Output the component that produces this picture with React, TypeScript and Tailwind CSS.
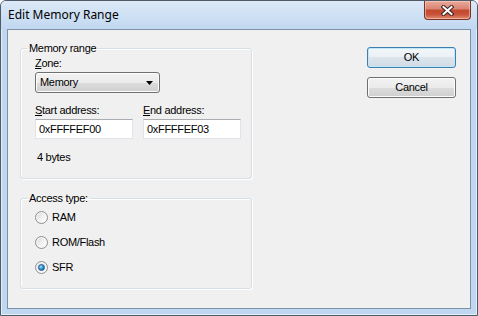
import React from "react";

function Radio({ label, checked }: { label: string; checked?: boolean }) {
  return (
    <div className="flex items-center h-[14px] gap-[4px]">
      <div className="w-[13px] h-[13px] rounded-full border border-[#8e8f8f] bg-[linear-gradient(135deg,#d9d9d9,#f4f4f4_60%,#ffffff)] flex items-center justify-center shadow-[inset_0_0_0_1px_#f7f7f7]">
        {checked && (
          <div className="w-[7px] h-[7px] rounded-full bg-[radial-gradient(circle_at_35%_35%,#9ee0ff,#2b8ad0_55%,#0d4f8a)] border border-[#1c5a8c]" />
        )}
      </div>
      <span>{label}</span>
    </div>
  );
}

export default function App() {
  return (
    <div className="w-[478px] h-[316px] flex flex-col border border-[#4f5b68] rounded-t-[6px] bg-[#bfd7f1] shadow-[inset_0_0_0_1px_#e4eefa] text-[11px] tracking-[-0.3px] text-black font-['Liberation_Sans',sans-serif]">
      {/* title bar */}
      <div className="h-[28px] flex items-start justify-between pl-[7px] pr-[6px] rounded-t-[5px] bg-gradient-to-b from-[#dce9f7] to-[#c1d8f1]">
        <span className="self-center text-[12px] tracking-normal font-['Noto_Sans',sans-serif]">
          Edit Memory Range
        </span>
        <div className="w-[47px] h-[19px] flex items-center justify-center rounded-b-[4px] border border-t-0 border-[#7a3328] bg-[linear-gradient(to_bottom,#e9aa9b_0%,#d98472_45%,#c3472f_50%,#c9533a_75%,#e08c72_100%)] shadow-[inset_0_0_0_1px_rgba(255,220,210,0.5)]">
          <svg width="13" height="11" viewBox="0 0 13 11">
            <g strokeLinecap="square">
              <line x1="2.5" y1="2" x2="10.5" y2="9" stroke="#3b2420" strokeWidth="4" />
              <line x1="10.5" y1="2" x2="2.5" y2="9" stroke="#3b2420" strokeWidth="4" />
              <line x1="2.5" y1="2" x2="10.5" y2="9" stroke="#ffffff" strokeWidth="2" />
              <line x1="10.5" y1="2" x2="2.5" y2="9" stroke="#ffffff" strokeWidth="2" />
            </g>
          </svg>
        </div>
      </div>

      {/* client area */}
      <div className="mx-[6px] mb-[6px] flex-1 flex border border-[#7f91a6] bg-[#f0f0f0]">
        <div className="ml-[12px] w-[232px] flex flex-col">
          {/* memory range group */}
          <fieldset className="mt-[11px] pl-[6px] pb-[14px] border border-[#d5dfe5] rounded-[3px] shadow-[inset_1px_1px_0_#ffffff,1px_1px_0_#ffffff]">
            <legend className="px-[2px] leading-[14px]">Memory range</legend>
            <div className="pl-[8px] pt-[1px] flex flex-col">
              <span className="leading-[14px]">
                <span className="underline">Z</span>one:
              </span>
              <div className="mt-[2px] w-[125px] h-[21px] flex items-center justify-between pl-[4px] pr-[6px] rounded-[3px] border border-[#707070] bg-[linear-gradient(to_bottom,#f2f2f2_0%,#ebebeb_50%,#dddddd_50%,#cfcfcf_100%)] shadow-[inset_0_0_0_1px_#fcfcfc]">
                <span>Memory</span>
                <svg width="7" height="4" viewBox="0 0 7 4">
                  <path d="M0 0H7L3.5 4Z" fill="#000" />
                </svg>
              </div>
              <div className="mt-[10px] grid grid-cols-[98px_98px] gap-x-[10px]">
                <span className="leading-[14px]">
                  <span className="underline">S</span>tart address:
                </span>
                <span className="leading-[14px]">
                  <span className="underline">E</span>nd address:
                </span>
                <div className="mt-[2px] h-[20px] flex items-center pl-[3px] bg-white border border-[#e2e3ea] border-t-[#abadb3]">
                  0xFFFFEF00
                </div>
                <div className="mt-[2px] h-[20px] flex items-center pl-[3px] bg-white border border-[#e2e3ea] border-t-[#abadb3]">
                  0xFFFFEF03
                </div>
              </div>
              <span className="mt-[11px] pl-[2px] leading-[14px]">4 bytes</span>
            </div>
          </fieldset>

          {/* access type group */}
          <fieldset className="mt-[12px] pl-[6px] pb-[14px] border border-[#d5dfe5] rounded-[3px] shadow-[inset_1px_1px_0_#ffffff,1px_1px_0_#ffffff]">
            <legend className="px-[2px] leading-[14px]">Access type:</legend>
            <div className="pl-[8px] pt-[5px] flex flex-col gap-[11px]">
              <Radio label="RAM" />
              <Radio label="ROM/Flash" />
              <Radio label="SFR" checked />
            </div>
          </fieldset>
        </div>

        {/* buttons */}
        <div className="ml-[115px] mt-[17px] flex flex-col gap-[9px]">
          <div className="w-[89px] h-[21px] flex items-center justify-center rounded-[3px] border border-[#3c7fb1] bg-[linear-gradient(to_bottom,#f3f7fa_0%,#eaf0f5_50%,#dce5ec_50%,#d0dbe4_100%)] shadow-[inset_0_0_0_1px_#bfe6f9]">
            OK
          </div>
          <div className="w-[89px] h-[21px] flex items-center justify-center rounded-[3px] border border-[#707070] bg-[linear-gradient(to_bottom,#f2f2f2_0%,#ebebeb_50%,#dddddd_50%,#cfcfcf_100%)] shadow-[inset_0_0_0_1px_#fcfcfc]">
            Cancel
          </div>
        </div>
      </div>
    </div>
  );
}
